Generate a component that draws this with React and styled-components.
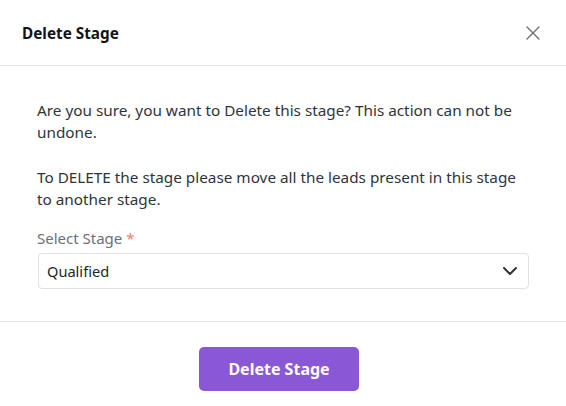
import React from "react";
import styled, { createGlobalStyle } from "styled-components";

const GlobalStyle = createGlobalStyle`
  html, body {
    margin: 0;
    padding: 0;
    background: #ffffff;
  }
  body {
    font-family: "Noto Sans", "Open Sans", sans-serif;
  }
  * {
    box-sizing: border-box;
  }
`;

const Modal = styled.div`
  width: 566px;
  height: 406px;
  background: #ffffff;
  display: flex;
  flex-direction: column;
`;

const Header = styled.header`
  height: 66px;
  padding: 0 22px;
  display: flex;
  align-items: center;
  justify-content: space-between;
  border-bottom: 1px solid #e3e5e8;
`;

const Title = styled.h2`
  margin: 0;
  font-size: 15.3px;
  font-weight: 700;
  color: #111418;
`;

const CloseButton = styled.button`
  width: 24px;
  height: 24px;
  padding: 0;
  margin-right: -1px;
  border: none;
  background: transparent;
  display: flex;
  align-items: center;
  justify-content: center;
  color: #6b7078;
  cursor: pointer;
`;

const Body = styled.div`
  padding: 33px 37px 32px 37px;
  border-bottom: 1px solid #e3e5e8;
`;

const Text = styled.p`
  margin: 0 0 ${(props) => props.$gap || 0}px;
  font-size: 15.3px;
  line-height: 22px;
  color: #30343a;
`;

const Label = styled.label`
  display: block;
  margin-bottom: 5px;
  font-size: 15px;
  line-height: 20px;
  color: #6c7178;
`;

const Required = styled.span`
  color: #ef7b7b;
`;

const SelectBox = styled.div`
  margin: 0 0 0 1px;
  height: 36px;
  padding: 0 11px 0 8px;
  border: 1px solid #dfe2e6;
  border-radius: 4px;
  display: flex;
  align-items: center;
  justify-content: space-between;
  font-size: 14.6px;
  color: #22262b;
`;

const Footer = styled.footer`
  flex: 1;
  display: flex;
  justify-content: center;
  padding: 25px 8px 0 0;
`;

const PrimaryButton = styled.button`
  width: 160px;
  height: 44px;
  border: none;
  border-radius: 5px;
  background: #8a58d6;
  color: #ffffff;
  font-family: inherit;
  font-size: 16px;
  font-weight: 700;
  cursor: pointer;
`;

const Chevron = () => (
  <svg width="14" height="8" viewBox="0 0 14 8" fill="none">
    <path
      d="M1 1 L7 7 L13 1"
      stroke="#2a2d31"
      strokeWidth="1.9"
      strokeLinecap="round"
      strokeLinejoin="round"
    />
  </svg>
);

const CloseIcon = () => (
  <svg width="14" height="14" viewBox="0 0 14 14" fill="none">
    <path
      d="M1 1 L13 13 M13 1 L1 13"
      stroke="currentColor"
      strokeWidth="1.4"
      strokeLinecap="round"
    />
  </svg>
);

const App = () => {
  return (
    <>
      <GlobalStyle />
      <Modal>
        <Header>
          <Title>Delete Stage</Title>
          <CloseButton aria-label="Close">
            <CloseIcon />
          </CloseButton>
        </Header>
        <Body>
          <Text $gap={23}>
            Are you sure, you want to Delete this stage? This action can not be
            undone.
          </Text>
          <Text $gap={18}>
            To DELETE the stage please move all the leads present in this stage
            to another stage.
          </Text>
          <Label>
            Select Stage <Required>*</Required>
          </Label>
          <SelectBox>
            <span>Qualified</span>
            <Chevron />
          </SelectBox>
        </Body>
        <Footer>
          <PrimaryButton>Delete Stage</PrimaryButton>
        </Footer>
      </Modal>
    </>
  );
};

export default App;
